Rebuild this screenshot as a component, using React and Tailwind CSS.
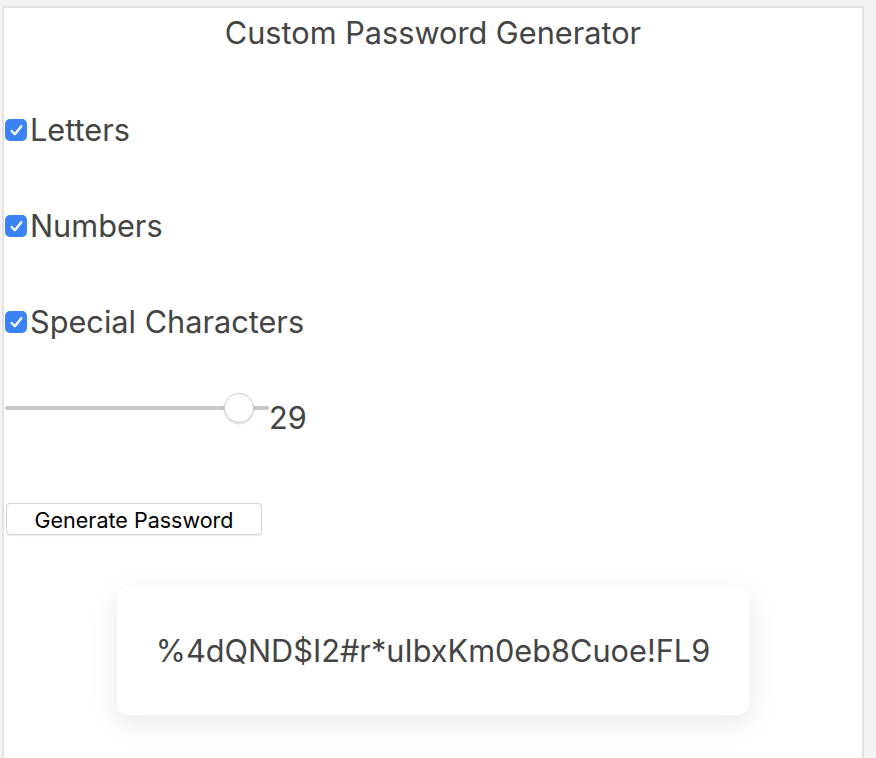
import { useState } from 'react';

function Check({ label }) {
  return (
    <label className="flex items-center h-[44px]">
      <span className="w-[22px] h-[22px] ml-[1px] mr-[3px] rounded-[5px] bg-[#3a82f7] flex items-center justify-center">
        <svg width="15" height="15" viewBox="0 0 14 14" fill="none">
          <path d="M2.5 7.5 L5.5 10.5 L11.5 3" stroke="white" strokeWidth="2.2" strokeLinecap="round" strokeLinejoin="round" />
        </svg>
      </span>
      <span className="text-[30.7px] text-[#444]">{label}</span>
    </label>
  );
}

export default function App() {
  const [len] = useState(29);
  const pw = '%4dQND$I2#r*uIbxKm0eb8Cuoe!FL9';

  return (
    <div className="w-[876px] h-[758px] overflow-hidden bg-[#f3f3f3] pt-[6px] pl-[2px]" style={{ fontFamily: 'Inter, sans-serif' }}>
      <div className="w-[862px] h-[800px] bg-white border-2 border-[#e3e3e3]">
        <h1 className="text-center text-[30.7px] leading-[50px] text-[#444]">Custom Password Generator</h1>

        <div className="mt-[50px] flex flex-col gap-[52px]">
          <Check label="Letters" />
          <Check label="Numbers" />
          <Check label="Special Characters" />
        </div>

        {/* длина пароля */}
        <div className="mt-[49px] flex items-end">
          <div className="relative w-[264px] h-[30px] ml-[1px]">
            <div className="absolute left-0 right-0 top-[13px] h-[4px] rounded-full bg-[#c8c8c8]" />
            <div className="absolute left-[219px] top-0 w-[30px] h-[30px] rounded-full bg-white border border-[#cfcfcf] shadow-[0_1px_2px_rgba(0,0,0,0.15)]" />
          </div>
          <span className="text-[30.7px] leading-[30px] text-[#444] -mb-[10px]">{len}</span>
        </div>

        <button className="mt-[80px] ml-[2px] w-[256px] h-[32px] rounded-[4px] border border-[#d4d4d4] bg-white text-[21.5px] text-black shadow-[0_1px_1px_rgba(0,0,0,0.08)]">
          Generate Password
        </button>

        <div className="mt-[52px] mx-auto w-[632px] h-[128px] rounded-[12px] bg-white shadow-[0_8px_30px_rgba(0,0,0,0.09)] flex items-center justify-center">
          <span className="text-[30.7px] text-[#444]">{pw}</span>
        </div>
      </div>
    </div>
  );
}
